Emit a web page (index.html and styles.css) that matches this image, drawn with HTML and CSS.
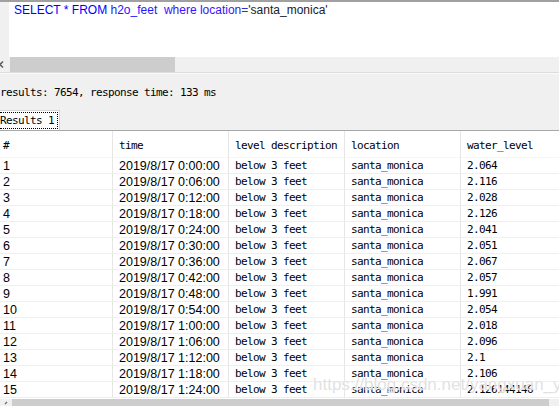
FILE: index.html
```html
<!DOCTYPE html>
<html>
<head>
<meta charset="utf-8">
<link rel="stylesheet" href="styles.css">
</head>
<body>
<div class="topline"></div>
<div class="editor">
  <div class="gutter"></div>
  <div class="code"><span class="kw">SELECT</span> <span class="kw">*</span> <span class="kw">FROM</span> <span class="id">h2o_feet</span>&nbsp; <span class="kw2">where</span> <span class="id2">location</span><span class="op">=</span><span class="str">'santa_monica'</span></div>
</div>
<div class="hscroll">
  <div class="arrow"><svg width="10" height="15" viewBox="0 0 10 15"><path d="M3 4.5 L0 7.5 L3 10.5" fill="none" stroke="#606060" stroke-width="1.6"/></svg></div>
  <div class="thumb"></div>
</div>
<div class="divider"></div>
<div class="status">results: 7654, response time: 133 ms</div>
<div class="tabs">
  <div class="tab"><span class="tab-label">Results 1</span></div>
</div>
<div class="grid">
  <div class="row head">
    <div class="cell c1 mono">#</div>
    <div class="cell mono">time</div>
    <div class="cell mono">level description</div>
    <div class="cell mono">location</div>
    <div class="cell mono last">water_level</div>
  </div>
  <div class="row"><div class="cell c1 sans">1</div><div class="cell sans">2019/8/17 0:00:00</div><div class="cell mono">below 3 feet</div><div class="cell mono">santa_monica</div><div class="cell mono last">2.064</div></div>
  <div class="row"><div class="cell c1 sans">2</div><div class="cell sans">2019/8/17 0:06:00</div><div class="cell mono">below 3 feet</div><div class="cell mono">santa_monica</div><div class="cell mono last">2.116</div></div>
  <div class="row"><div class="cell c1 sans">3</div><div class="cell sans">2019/8/17 0:12:00</div><div class="cell mono">below 3 feet</div><div class="cell mono">santa_monica</div><div class="cell mono last">2.028</div></div>
  <div class="row"><div class="cell c1 sans">4</div><div class="cell sans">2019/8/17 0:18:00</div><div class="cell mono">below 3 feet</div><div class="cell mono">santa_monica</div><div class="cell mono last">2.126</div></div>
  <div class="row"><div class="cell c1 sans">5</div><div class="cell sans">2019/8/17 0:24:00</div><div class="cell mono">below 3 feet</div><div class="cell mono">santa_monica</div><div class="cell mono last">2.041</div></div>
  <div class="row"><div class="cell c1 sans">6</div><div class="cell sans">2019/8/17 0:30:00</div><div class="cell mono">below 3 feet</div><div class="cell mono">santa_monica</div><div class="cell mono last">2.051</div></div>
  <div class="row"><div class="cell c1 sans">7</div><div class="cell sans">2019/8/17 0:36:00</div><div class="cell mono">below 3 feet</div><div class="cell mono">santa_monica</div><div class="cell mono last">2.067</div></div>
  <div class="row"><div class="cell c1 sans">8</div><div class="cell sans">2019/8/17 0:42:00</div><div class="cell mono">below 3 feet</div><div class="cell mono">santa_monica</div><div class="cell mono last">2.057</div></div>
  <div class="row"><div class="cell c1 sans">9</div><div class="cell sans">2019/8/17 0:48:00</div><div class="cell mono">below 3 feet</div><div class="cell mono">santa_monica</div><div class="cell mono last">1.991</div></div>
  <div class="row"><div class="cell c1 sans">10</div><div class="cell sans">2019/8/17 0:54:00</div><div class="cell mono">below 3 feet</div><div class="cell mono">santa_monica</div><div class="cell mono last">2.054</div></div>
  <div class="row"><div class="cell c1 sans">11</div><div class="cell sans">2019/8/17 1:00:00</div><div class="cell mono">below 3 feet</div><div class="cell mono">santa_monica</div><div class="cell mono last">2.018</div></div>
  <div class="row"><div class="cell c1 sans">12</div><div class="cell sans">2019/8/17 1:06:00</div><div class="cell mono">below 3 feet</div><div class="cell mono">santa_monica</div><div class="cell mono last">2.096</div></div>
  <div class="row"><div class="cell c1 sans">13</div><div class="cell sans">2019/8/17 1:12:00</div><div class="cell mono">below 3 feet</div><div class="cell mono">santa_monica</div><div class="cell mono last">2.1</div></div>
  <div class="row"><div class="cell c1 sans">14</div><div class="cell sans">2019/8/17 1:18:00</div><div class="cell mono">below 3 feet</div><div class="cell mono">santa_monica</div><div class="cell mono last">2.106</div></div>
  <div class="row"><div class="cell c1 sans">15</div><div class="cell sans">2019/8/17 1:24:00</div><div class="cell mono">below 3 feet</div><div class="cell mono">santa_monica</div><div class="cell mono last">2.126144146</div></div>
</div>
<div class="bscroll">
  <div class="arrow"><svg width="12" height="8" viewBox="0 0 12 8"><path d="M7 3 L5 5" fill="none" stroke="#707070" stroke-width="1.4"/></svg></div>
  <div class="thumb"></div>
</div>
<div class="watermark">https://blog.csdn.net/yangxuan_yu</div>
</body>
</html>
```
FILE: styles.css
```css
html, body {
  margin: 0;
  padding: 0;
}
body {
  width: 559px;
  height: 406px;
  overflow: hidden;
  background: #f0f0f0;
  position: relative;
  color: #000;
}
.topline {
  height: 2px;
  background: #a0a0a0;
}
.editor {
  display: flex;
  height: 55px;
}
.gutter {
  width: 9px;
  background: #f0f0f0;
}
.code {
  flex: 1;
  background: #fff;
  padding-left: 5px;
  font-family: "Liberation Sans", Arial, sans-serif;
  font-size: 12px;
  line-height: 17px;
  white-space: pre;
}
.kw { color: #0000ff; }
.id { color: #1a1aff; }
.kw2 { color: #3a10ff; }
.id2 { color: #3a10ff; }
.op { color: #3030c0; }
.str { color: #1a1a2a; }
.hscroll {
  display: flex;
  height: 15px;
  background: #f0f0f0;
}
.hscroll .arrow {
  width: 10px;
}
.hscroll .arrow svg { display: block; }
.hscroll .thumb {
  width: 165px;
  background: #cdcdcd;
}
.divider {
  height: 1px;
  border-top: 1px solid #dcdcdc;
  background: #fbfbfb;
}
.status {
  height: 36px;
  box-sizing: border-box;
  padding-top: 11px;
  line-height: 16px;
  font-family: "DejaVu Sans Mono", monospace;
  font-size: 11px;
  letter-spacing: -0.62px;
  white-space: pre;
}
.tabs {
  height: 20px;
  display: flex;
  border-bottom: 1px solid #a8a8a8;
}
.tab {
  width: 60px;
  box-sizing: border-box;
  background: #fff;
  border-top: 1px solid #d6d6d6;
  border-right: 1px solid #d6d6d6;
  padding: 1px 1px 0 0;
}
.tab-label {
  display: block;
  height: 17px;
  box-sizing: border-box;
  border: 1px dotted #000;
  border-left: none;
  font-family: "DejaVu Sans Mono", monospace;
  font-size: 11px;
  letter-spacing: -0.62px;
  line-height: 15px;
  white-space: pre;
}
.grid {
  background: #fff;
  padding-bottom: 1px;
}
.row {
  display: grid;
  grid-template-columns: 113px 116px 116px 116px 1fr;
  height: 16px;
}
.row.head {
  height: 27px;
}
.cell {
  box-sizing: border-box;
  border-right: 1px solid #e6e6e6;
  border-bottom: 1px solid #efefef;
  padding-left: 6px;
  padding-top: 1px;
  line-height: 14px;
  white-space: pre;
  overflow: hidden;
}
.head .cell {
  line-height: 24px;
  padding-top: 3px;
  border-bottom: 1px solid #f6f6f6;
}
.cell.c1 { padding-left: 3px; }
.cell.last { border-right: none; }
.mono {
  font-family: "DejaVu Sans Mono", monospace;
  font-size: 11px;
  letter-spacing: -0.62px;
}
.sans {
  font-family: "Liberation Sans", Arial, sans-serif;
  font-size: 12.5px;
}
.bscroll {
  display: flex;
  height: 16px;
  background: #f0f0f0;
}
.bscroll .arrow { width: 12px; }
.bscroll .arrow svg { display: block; }
.bscroll .thumb {
  width: 537px;
  background: #cdcdcd;
}
.watermark {
  position: absolute;
  left: 313px;
  top: 375px;
  font-family: "Liberation Sans", Arial, sans-serif;
  font-size: 17px;
  line-height: 20px;
  color: rgba(195, 195, 195, 0.5);
  text-shadow: 0 0 1px #fff, 0 0 1px #fff;
  white-space: pre;
}
```
